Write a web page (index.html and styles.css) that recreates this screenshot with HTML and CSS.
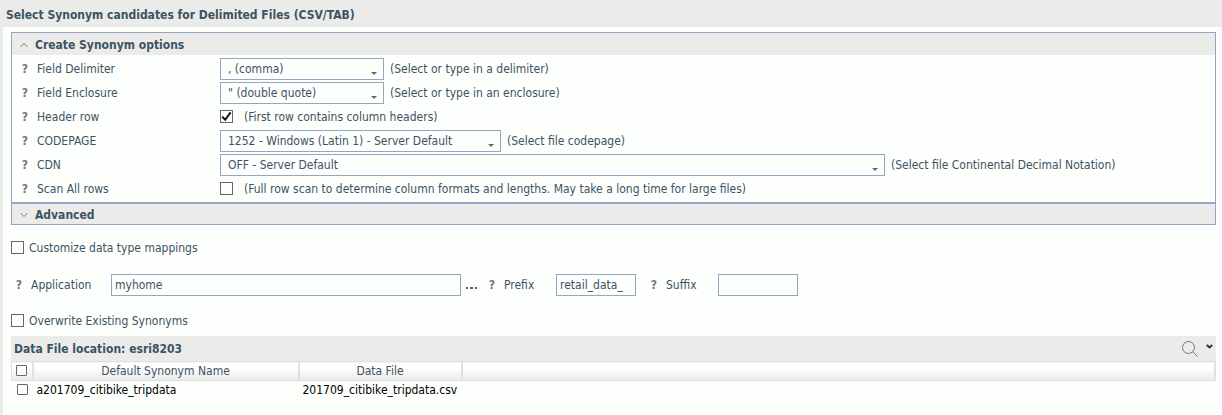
FILE: index.html
```html
<!DOCTYPE html>
<html lang="en">
<head>
    <meta charset="UTF-8">
    <meta name="viewport" content="width=device-width, initial-scale=1.0">
    <title>Select Synonym candidates</title>
    <link rel="stylesheet" href="styles.css">
</head>
<body>
    <header class="page-title">
        <h1>Select Synonym candidates for Delimited Files (CSV/TAB)</h1>
    </header>
    <main class="content">
        <form id="synonymForm">
            <section class="panel">
                <button type="button" class="panel-header open">
                    <svg class="chevron" width="8" height="6" viewBox="0 0 8 6"><path d="M0.5 5L4 1.5L7.5 5"/></svg>
                    Create Synonym options
                </button>
                <div class="panel-body">
                    <div class="row">
                        <button type="button" class="help">?</button>
                        <label class="row-label" for="delimiter">Field Delimiter</label>
                        <span class="select"><select id="delimiter" class="size-small"><option>, (comma)</option></select></span>
                        <span class="hint">(Select or type in a delimiter)</span>
                    </div>
                    <div class="row">
                        <button type="button" class="help">?</button>
                        <label class="row-label" for="enclosure">Field Enclosure</label>
                        <span class="select"><select id="enclosure" class="size-small"><option>" (double quote)</option></select></span>
                        <span class="hint">(Select or type in an enclosure)</span>
                    </div>
                    <div class="row">
                        <button type="button" class="help">?</button>
                        <label class="row-label" for="headerRow">Header row</label>
                        <span class="check"><input type="checkbox" id="headerRow" checked><svg width="11" height="11" viewBox="0 0 11 11"><path d="M1.2 5.6L4.2 8.8L9.6 1.4"/></svg></span>
                        <span class="hint check-hint">(First row contains column headers)</span>
                    </div>
                    <div class="row">
                        <button type="button" class="help">?</button>
                        <label class="row-label" for="codepage">CODEPAGE</label>
                        <span class="select"><select id="codepage" class="size-medium"><option>1252 - Windows (Latin 1) - Server Default</option></select></span>
                        <span class="hint">(Select file codepage)</span>
                    </div>
                    <div class="row">
                        <button type="button" class="help">?</button>
                        <label class="row-label" for="cdn">CDN</label>
                        <span class="select"><select id="cdn" class="size-large"><option>OFF - Server Default</option></select></span>
                        <span class="hint">(Select file Continental Decimal Notation)</span>
                    </div>
                    <div class="row">
                        <button type="button" class="help">?</button>
                        <label class="row-label" for="scanAll">Scan All rows</label>
                        <span class="check"><input type="checkbox" id="scanAll"></span>
                        <span class="hint check-hint">(Full row scan to determine column formats and lengths. May take a long time for large files)</span>
                    </div>
                </div>
            </section>
            <section class="panel">
                <button type="button" class="panel-header">
                    <svg class="chevron" width="8" height="6" viewBox="0 0 8 6"><path d="M0.5 1L4 4.5L7.5 1"/></svg>
                    Advanced
                </button>
            </section>

            <div class="check-line">
                <input type="checkbox" id="customize">
                <label for="customize">Customize data type mappings</label>
            </div>

            <div class="target">
                <button type="button" class="help">?</button>
                <label class="app-label" for="application">Application</label>
                <input type="text" id="application" class="text app-input" value="myhome">
                <button type="button" class="browse" aria-label="Browse"><svg width="11" height="2" viewBox="0 0 11 2"><path d="M0 0h2v2H0zM4 0h3v2H4zM9 0h2v2H9z"/></svg></button>
                <button type="button" class="help">?</button>
                <label class="fix-label" for="prefix">Prefix</label>
                <input type="text" id="prefix" class="text fix-input" value="retail_data_">
                <button type="button" class="help">?</button>
                <label class="fix-label" for="suffix">Suffix</label>
                <input type="text" id="suffix" class="text fix-input">
            </div>

            <div class="check-line">
                <input type="checkbox" id="overwrite">
                <label for="overwrite">Overwrite Existing Synonyms</label>
            </div>

            <section class="files">
                <div class="files-bar">
                    <h2>Data File location: esri8203</h2>
                    <button type="button" class="search" aria-label="Search">
                        <svg width="18" height="18" viewBox="0 0 18 18"><circle cx="7.5" cy="7.5" r="6"/><path d="M11.8 11.8L16.5 16.5"/></svg>
                        <svg class="more" width="7" height="5" viewBox="0 0 7 5"><path d="M0.8 1L3.5 3.4L6.2 1"/></svg>
                    </button>
                </div>
                <table>
                    <thead>
                        <tr>
                            <th class="col-check"><input type="checkbox" class="small" aria-label="Select all"></th>
                            <th class="col-name">Default Synonym Name</th>
                            <th class="col-file">Data File</th>
                            <th></th>
                        </tr>
                    </thead>
                    <tbody>
                        <tr>
                            <td class="col-check"><input type="checkbox" class="small" aria-label="Select a201709_citibike_tripdata"></td>
                            <td>a201709_citibike_tripdata</td>
                            <td>201709_citibike_tripdata.csv</td>
                            <td></td>
                        </tr>
                    </tbody>
                </table>
            </section>
        </form>
    </main>
</body>
</html>
```
FILE: styles.css
```css
* {
    box-sizing: border-box;
}
body {
    margin: 0;
    background-color: #fdfffc;
    color: #3c5362;
    font-family: "DejaVu Sans Condensed", "DejaVu Sans", sans-serif;
    font-size: 12px;
    line-height: 16px;
}
button,
input,
select {
    margin: 0;
    font: inherit;
    color: inherit;
}
button {
    padding: 0;
    border: none;
    background: none;
    cursor: pointer;
}
h1,
h2 {
    margin: 0;
    font-size: 12px;
    font-weight: bold;
}
svg {
    display: block;
    fill: none;
    stroke: #777;
}
.page-title {
    background-color: #ebecea;
    padding: 7px 6px 4px;
}
.content {
    min-height: calc(100vh - 27px);
    border-left: 3px solid #ebecea;
    padding: 5px 6px 14px 8px;
}

/* option panels */
.panel {
    border: 1px solid #94a7c0;
}
.panel-header {
    display: flex;
    align-items: center;
    gap: 7px;
    width: 100%;
    height: 20px;
    padding: 2px 0 0 8px;
    background-color: #ebecea;
    font-weight: bold;
}
.panel-header.open {
    height: 22px;
}
.panel-body {
    padding: 2px 0 1px;
}
.row {
    display: flex;
    align-items: center;
    height: 24px;
    padding-left: 9px;
}
.help {
    width: 8px;
    color: #777;
    font-weight: bold;
}
.row-label {
    width: 183px;
    margin-left: 8px;
}
.hint {
    margin-left: 6px;
}
.check-hint {
    margin-left: 11px;
}
.select {
    position: relative;
}
.select::after {
    content: "";
    position: absolute;
    right: 7px;
    bottom: 5px;
    border: 3px solid transparent;
    border-top-color: #666;
    border-bottom: none;
    pointer-events: none;
}
select {
    display: block;
    height: 22px;
    padding: 0 20px 0 7px;
    border: 1px solid #94a7c0;
    border-radius: 0;
    background-color: #fdfffc;
    appearance: none;
}
.size-small {
    width: 164px;
}
.size-medium {
    width: 281px;
}
.size-large {
    width: 665px;
}

/* checkboxes */
input[type="checkbox"] {
    display: block;
    width: 13px;
    height: 13px;
    margin-bottom: 1px;
    border: 1px solid #666;
    background-color: #fff;
    appearance: none;
}
input[type="checkbox"].small {
    width: 11px;
    height: 11px;
    margin: 0 auto 1px;
    border-radius: 1px;
}
.check {
    position: relative;
}
.check svg {
    position: absolute;
    top: 1px;
    left: 1px;
    stroke: #111;
    stroke-width: 2;
    pointer-events: none;
}
.check input:not(:checked) + svg {
    display: none;
}
.check-line {
    display: flex;
    align-items: center;
    gap: 5px;
    height: 16px;
}

/* application, prefix and suffix */
.panel + .check-line {
    margin-top: 15px;
}
.target {
    display: flex;
    align-items: center;
    margin: 18px 0 17px;
    padding-left: 4px;
}
.app-label {
    width: 80px;
    margin-left: 8px;
}
.fix-label {
    width: 52px;
    margin-left: 8px;
}
.text {
    height: 22px;
    padding: 0 3px;
    border: 1px solid #94a7c0;
    background-color: #fdfffc;
}
.app-input {
    width: 350px;
}
.fix-input {
    width: 80px;
}
.fix-input + .help {
    margin-left: 14px;
}
.browse {
    margin: 5px 11px 0 5px;
}
.browse svg {
    fill: #666;
    stroke: none;
}

/* data files */
.files {
    margin-top: 7px;
}
.files-bar {
    display: flex;
    align-items: center;
    justify-content: space-between;
    height: 25px;
    padding: 0 3px;
    background-color: #ebecea;
}
.search {
    display: flex;
    align-items: center;
    gap: 7px;
}
.more {
    margin-bottom: 4px;
    stroke: #333;
    stroke-width: 2;
}
table {
    width: 100%;
    border-collapse: collapse;
    table-layout: fixed;
}
th {
    height: 19px;
    padding: 0;
    border: 1px solid #e2e0e4;
    border-right-width: 2px;
    background: linear-gradient(#fff 30%, #e9e9e9);
    font-weight: normal;
}
td {
    height: 19px;
    padding: 0 4px;
    color: #000;
}
.col-check {
    width: 21px;
    padding: 0;
}
.col-name {
    width: 266px;
}
.col-file {
    width: 163px;
}
```
